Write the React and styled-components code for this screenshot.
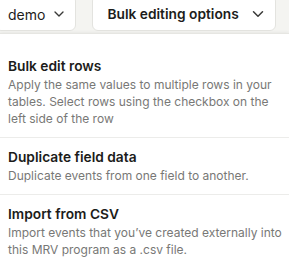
import React from "react";
import styled, { createGlobalStyle } from "styled-components";

const GlobalStyle = createGlobalStyle`
  html, body {
    margin: 0;
    padding: 0;
    background: #f4f4f1;
    font-family: Inter, "Noto Sans", sans-serif;
    overflow: hidden;
  }
`;

const options = [
  {
    id: "bulk",
    title: "Bulk edit rows",
    text: "Apply the same values to multiple rows in your tables. Select rows using the checkbox on the left side of the row",
  },
  {
    id: "dup",
    title: "Duplicate field data",
    text: "Duplicate events from one field to another.",
  },
  {
    id: "csv",
    title: "Import from CSV",
    text: "Import events that you\u2019ve created externally into this MRV program as a .csv file.",
  },
];

const Chevron = ({ size = 16 }) => (
  <svg
    width={size}
    height={size}
    viewBox="0 0 24 24"
    fill="none"
    stroke="currentColor"
    strokeWidth="2"
    strokeLinecap="round"
    strokeLinejoin="round"
  >
    <path d="m6 9 6 6 6-6" />
  </svg>
);

const App = () => {
  return (
    <>
      <GlobalStyle />
      <Toolbar>
        <SelectButton $offset>
          demo
          <Chevron size={16} />
        </SelectButton>
        <SelectButton $bold $pad="14px">
          Bulk editing options
          <Chevron size={18} />
        </SelectButton>
      </Toolbar>
      <Panel>
        {options.map((o) => (
          <Option key={o.id}>
            <OptionTitle>{o.title}</OptionTitle>
            <OptionText>{o.text}</OptionText>
          </Option>
        ))}
      </Panel>
    </>
  );
};

const Toolbar = styled.div`
  display: flex;
  align-items: flex-start;
  gap: 16px;
  height: 38px;
  margin-top: -5px;
`;

const SelectButton = styled.button`
  display: flex;
  align-items: center;
  gap: ${(p) => (p.$bold ? "10px" : "6px")};
  height: 36px;
  margin-left: ${(p) => (p.$offset ? "-5px" : "0")};
  padding: 2px 8px 0 ${(p) => p.$pad || "12px"};
  background: #fff;
  border: 1px solid #e3e3df;
  border-radius: 6px;
  font-family: Inter, "Noto Sans", sans-serif;
  font-size: ${(p) => (p.$bold ? "13.75px" : "14px")};
  font-weight: ${(p) => (p.$bold ? 600 : 400)};
  color: #1d1d1b;
  cursor: pointer;

  svg {
    color: #3a3a38;
  }
`;

const Panel = styled.div`
  box-sizing: border-box;
  background: #fff;
  border-top: 1px solid #e6e6e2;
  box-shadow: 0 -1px 3px rgba(0, 0, 0, 0.05);
  padding-top: 13px;
  min-height: calc(100vh - 33px);
`;

const Option = styled.div`
  padding: 10px 4px 10px 8px;
  border-bottom: 1px solid #ececea;

  &:last-child {
    border-bottom: none;
  }
`;

const OptionTitle = styled.div`
  font-size: 13.75px;
  line-height: 18px;
  font-weight: 600;
  color: #1c1c1a;
  margin-bottom: 1px;
`;

const OptionText = styled.div`
  font-size: 12px;
  line-height: 17px;
  color: #787876;
`;

export default App;
